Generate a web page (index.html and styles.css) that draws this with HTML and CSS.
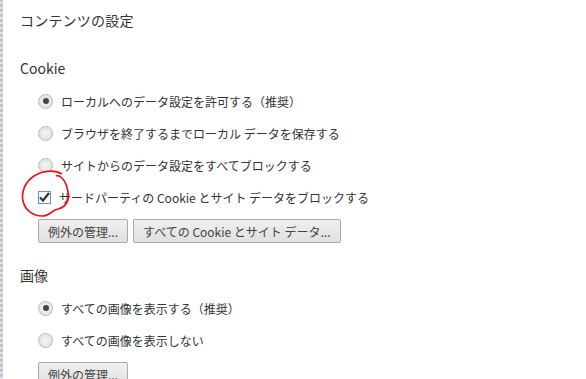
FILE: index.html
```html
<!DOCTYPE html>
<html lang="ja">
<head>
  <meta charset="UTF-8">
  <title>コンテンツの設定</title>
  <link rel="stylesheet" href="styles.css">
</head>
<body>
  <div class="edge"></div>
  <div class="page">
    <h1>コンテンツの設定</h1>

    <section class="group">
      <h2>Cookie</h2>
      <label class="row"><span class="radio on"></span>ローカルへのデータ設定を許可する（推奨）</label>
      <label class="row"><span class="radio"></span>ブラウザを終了するまでローカル データを保存する</label>
      <label class="row"><span class="radio"></span>サイトからのデータ設定をすべてブロックする</label>
      <label class="row check-row">
        <span class="check">
          <svg width="11" height="10" viewBox="0 0 11 10"><path d="M1 5.5 L4 8.5 L10 1" fill="none" stroke="#333" stroke-width="2.2"/></svg>
        </span>サードパーティの Cookie とサイト データをブロックする
        <svg class="circle" width="52" height="50" viewBox="0 0 52 50">
          <path d="M42 4 C34 -1 22 1 14 6 C5 12 1 22 3 31 C5 40 13 46 22 46 C30 46 32 40 38 39 C46 37 50 30 48 22 C47 15 45 11 42 8 C40 6 38 5 36 6" fill="none" stroke="#e8141c" stroke-width="1.7"/>
        </svg>
      </label>
      <div class="buttons">
        <button>例外の管理...</button>
        <button>すべての Cookie とサイト データ...</button>
      </div>
    </section>

    <section class="group">
      <h2>画像</h2>
      <label class="row"><span class="radio on"></span>すべての画像を表示する（推奨）</label>
      <label class="row"><span class="radio"></span>すべての画像を表示しない</label>
      <div class="buttons">
        <button>例外の管理...</button>
      </div>
    </section>
  </div>
</body>
</html>
```

FILE: styles.css
```css
body {
  margin: 0;
  background: #fff;
  font-family: "Noto Sans CJK JP", "Noto Sans", sans-serif;
  color: #333;
  display: flex;
  height: 379px;
  overflow: hidden;
}

.edge {
  width: 3px;
  flex: none;
  background: repeating-linear-gradient(180deg, #c9c3d6 0 2px, #e6e1ee 2px 4px, #b9c4b8 4px 5px);
}

.page {
  padding: 8px 0 0 17px;
}

h1 {
  font-size: 14px;
  letter-spacing: 0.2px;
  font-weight: normal;
  margin: 0 0 25px;
  line-height: 24px;
}

h2 {
  font-size: 14px;
  font-weight: normal;
  margin: 0 0 6px;
  line-height: 22px;
}

.group {
  margin-bottom: 21px;
}

.row {
  position: relative;
  display: flex;
  align-items: center;
  height: 32px;
  padding-left: 18px;
  font-size: 12px;
  gap: 8px;
}

.radio {
  width: 13px;
  height: 13px;
  border-radius: 50%;
  border: 1px solid #b8b8b8;
  background: radial-gradient(circle, #f6f6f6 0, #dcdcdc 100%);
  display: flex;
  align-items: center;
  justify-content: center;
}

.radio.on::after {
  content: "";
  width: 6px;
  height: 6px;
  border-radius: 50%;
  background: #444;
}

.check {
  width: 11px;
  height: 11px;
  border: 1px solid #6b8fc7;
  background: #f4f7fc;
  display: flex;
  align-items: center;
  justify-content: center;
}

.circle {
  position: absolute;
  left: 0;
  top: -11px;
}

.buttons {
  display: flex;
  gap: 5px;
  padding-left: 18px;
  margin-top: 6px;
}

button {
  font-family: inherit;
  font-size: 12px;
  color: #444;
  height: 24px;
  padding: 0 9px;
  border: 1px solid #aaa;
  border-radius: 2px;
  background: linear-gradient(#f0f0f0, #e0e0e0);
}
```
